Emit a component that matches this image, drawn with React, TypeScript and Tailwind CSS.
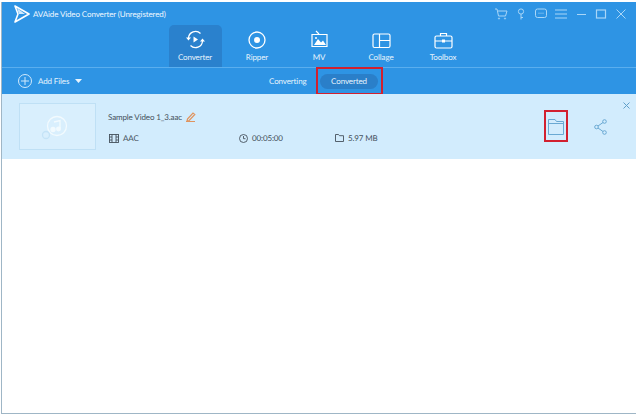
export default function App() {
  const tab = "w-[62px] h-[42px] flex flex-col items-center";
  return (
    <div className="w-[640px] h-[417px] bg-white pt-[2px] pl-[1px] pr-[4px] pb-[3px] font-['Lato','Noto_Sans',sans-serif] text-[8px] tracking-[-0.12px] leading-[10px] [text-rendering:geometricPrecision]">
      <div className="relative w-full h-full border-l border-b border-[#9fb6c6] flex flex-col bg-white">
        <div className="bg-[#2e94e4] h-[65px] flex flex-col text-white">
          <div className="h-[23px] flex items-center pl-[12px] pr-[8px]">
            <svg width="16" height="18" viewBox="0 0 16 18" fill="none">
              <path d="M1 1 L15 9 L1 17 L4 9 Z" stroke="#fff" strokeWidth="1.6" strokeLinejoin="round" />
              <path d="M3 3 L11 9 L5 9 Z" fill="#cfe8fb" />
            </svg>
            <span className="ml-[3px] text-[#f0f8ff]">AVAide Video Converter (Unregistered)</span>
            <div className="ml-auto flex items-center gap-[6px] text-[#a9d6f7]">
              <svg width="14" height="12" viewBox="0 0 14 12" fill="none" stroke="currentColor" strokeWidth="1"><path d="M1 1h2l1.500 7h7L13 3H4" /><circle cx="5" cy="10.500" r=".6" /><circle cx="11" cy="10.500" r=".6" /></svg>
              <svg width="14" height="12" viewBox="0 0 14 12" fill="none" stroke="currentColor" strokeWidth="1"><circle cx="7" cy="3.500" r="2.600" /><path d="M7 6v5.500M7 9.500h2" /></svg>
              <svg width="14" height="12" viewBox="0 0 14 12" fill="none" stroke="currentColor" strokeWidth="1"><rect x="1.500" y="1" width="11" height="8.500" rx="2" /><path d="M4.500 5.200h1M6.500 5.200h1M8.500 5.200h1" /></svg>
              <svg width="14" height="12" viewBox="0 0 14 12" fill="none" stroke="currentColor" strokeWidth="1"><path d="M1 2h12M1 6h12M1 10h12" /></svg>
              <svg width="14" height="12" viewBox="0 0 14 12" fill="none" stroke="currentColor" strokeWidth="1"><path d="M3 6.500h9" /></svg>
              <svg width="14" height="12" viewBox="0 0 14 12" fill="none" stroke="currentColor" strokeWidth="1.200"><rect x="2.500" y="2" width="9" height="8" /></svg>
              <svg width="14" height="12" viewBox="0 0 14 12" fill="none" stroke="currentColor" strokeWidth="1"><path d="M2.500 1.500l9 9M11.500 1.500l-9 9" /></svg>
            </div>
          </div>
          <div className="flex justify-center h-[42px] text-[#e8f4fd]">
            <div className={tab}>
              <div className="w-[53px] h-[42px] bg-[#2a81cd] rounded-t-[5px] flex flex-col items-center pt-[5px]">
                <svg width="21" height="19" viewBox="0 0 21 19" fill="none" stroke="#fff" strokeWidth="1.300">
                  <path d="M3.500 8a7 7 0 0 1 12-4.500" />
                  <path d="M17.500 11a7 7 0 0 1-12 4.500" />
                  <path d="M1 7.500h5L3.500 10.500zM15 11.500h5L17.500 8.500z" fill="#fff" stroke="none" />
                  <path d="M8.500 6.500l4.500 3-4.500 3z" fill="#fff" stroke="none" />
                </svg>
                <span className="mt-[3px]">Converter</span>
              </div>
            </div>
            <div className={tab}>
              <div className="pt-[6px]">
                <svg width="18" height="18" viewBox="0 0 18 18" fill="none"><circle cx="9" cy="9" r="8" stroke="#fff" strokeWidth="1.300" /><circle cx="9" cy="9" r="3" fill="#fff" /></svg>
              </div>
              <span className="mt-[3px]">Ripper</span>
            </div>
            <div className={tab}>
              <div className="pt-[5px]">
                <svg width="19" height="19" viewBox="0 0 19 19" fill="none" stroke="#fff" strokeWidth="1.200"><path d="M6 1l3 3M2 4.500h15v12H2z" /><path d="M4 15l4-6 3 3.500 2-2 3 4.500z" fill="#fff" stroke="none" /><circle cx="6" cy="8" r="1" fill="#fff" stroke="none" /></svg>
              </div>
              <span className="mt-[3px]">MV</span>
            </div>
            <div className={tab}>
              <div className="pt-[8px]">
                <svg width="19" height="16" viewBox="0 0 19 16" fill="none" stroke="#fff" strokeWidth="1.200"><rect x="1" y="1" width="17" height="13.500" rx="1.500" /><path d="M7.500 1v13.500M7.500 7.500H18" /></svg>
              </div>
              <span className="mt-[3px]">Collage</span>
            </div>
            <div className={tab}>
              <div className="pt-[7px]">
                <svg width="19" height="17" viewBox="0 0 19 17" fill="none" stroke="#fff" strokeWidth="1.200"><rect x="1" y="4" width="17" height="12" rx="1.500" /><path d="M6.500 4V1.500h6V4M1 9h17" /><rect x="8" y="7.500" width="3" height="3" fill="#fff" stroke="none" /></svg>
              </div>
              <span className="mt-[3px]">Toolbox</span>
            </div>
          </div>
        </div>
        <div className="relative h-[27px] bg-[#2e94e4] border-t border-[#5aaeee] flex items-center text-[#e8f4fd]">
          <div className="w-[267px] flex items-center pl-[16px]">
            <svg width="14" height="14" viewBox="0 0 14 14" fill="none" stroke="#cfe8fb" strokeWidth="1"><circle cx="7" cy="7" r="6.500" /><path d="M7 3v8M3 7h8" /></svg>
            <span className="ml-[6px] w-[37px] whitespace-nowrap">Add Files</span>
            <svg width="7" height="4" viewBox="0 0 7 4"><path d="M0 0h7L3.500 4z" fill="#e8f4fd" /></svg>
          </div>
          <span className="w-[51px]">Converting</span>
          <span className="w-[58px] h-[15px] rounded-full bg-[#2a7fc9] flex items-center justify-center">Converted</span>
          <div className="absolute left-[314px] top-[-1px] w-[67px] h-[28px] border-[2px] border-[#d2202f]" />
        </div>
        <div className="relative h-[65px] bg-[#d2ecfd] flex items-center pl-[17px] text-[#45515c]">
          <div className="w-[77px] h-[47px] bg-[#d9effd] border border-[#bfe0f5] flex items-center justify-center">
            <svg className="mr-[3px]" width="30" height="26" viewBox="0 0 30 26" fill="none" stroke="#f2fafe" strokeWidth="1.300"><circle cx="16" cy="12" r="9.500" /><circle cx="5" cy="21" r="3.500" stroke="#c4e3f7" /><path d="M13 8l6-1.500v8" /><circle cx="12" cy="15.500" r="2" fill="#f2fafe" /><circle cx="17.500" cy="15" r="1.800" fill="#f2fafe" /></svg>
          </div>
          <div className="ml-[12px] pt-[2px] flex flex-col">
            <div className="flex items-center h-[12px]">
              <span>Sample Video 1_3.aac</span>
              <svg className="ml-[4px]" width="10" height="10" viewBox="0 0 10 10" fill="none" stroke="#e0945f" strokeWidth="1.200"><path d="M1.500 7l5.500-6 1.800 1.500L3.200 8.500 1 9zM0 9.500h9" /></svg>
            </div>
            <div className="flex items-center h-[12px] mt-[9px] pl-[1px]">
              <div className="w-[130px] flex items-center">
                <svg width="10" height="9" viewBox="0 0 10 9" fill="none" stroke="#45515c" strokeWidth=".9"><rect x=".5" y=".5" width="9" height="8" /><path d="M3 .5v8M7 .5v8M.5 3h2.500M.5 6h2.500M7 3h2.500M7 6h2.500" /></svg>
                <span className="ml-[4px]">AAC</span>
              </div>
              <div className="w-[96px] flex items-center">
                <svg width="9" height="9" viewBox="0 0 9 9" fill="none" stroke="#45515c" strokeWidth=".9"><circle cx="4.500" cy="4.500" r="4" /><path d="M4.500 2v2.700h2" /></svg>
                <span className="ml-[4px]">00:05:00</span>
              </div>
              <div className="flex items-center">
                <svg width="9" height="8" viewBox="0 0 9 8" fill="none" stroke="#45515c" strokeWidth=".9"><path d="M.5 7.500v-7h3l1 1.200h4v5.800z" /></svg>
                <span className="ml-[4px]">5.97 MB</span>
              </div>
            </div>
          </div>
          <button className="absolute right-[6px] top-[8px] text-[#5f9fc9]">
            <svg width="7" height="7" viewBox="0 0 7 7" fill="none" stroke="currentColor" strokeWidth="1"><path d="M.5.500l6 6M6.500.500l-6 6" /></svg>
          </button>
          <div className="ml-auto flex items-center pr-[29px] gap-[30px] text-[#6aa9d3]">
            <svg width="16" height="16" viewBox="0 0 16 16" fill="none" stroke="currentColor" strokeWidth="1"><path d="M.5 15.500V.5h6.500l1.500 2h7v13z" /><path d="M.5 4.500h15" /></svg>
            <svg width="13" height="16" viewBox="0 0 13 16" fill="none" stroke="currentColor" strokeWidth="1"><circle cx="2.500" cy="8" r="1.800" /><circle cx="10.500" cy="2.500" r="1.800" /><circle cx="10.500" cy="13.500" r="1.800" /><path d="M4 7l5-3.500M4 9l5 3.500" /></svg>
          </div>
          <div className="absolute left-[542px] top-[16px] w-[24px] h-[32px] border-[2px] border-[#d2202f]" />
        </div>
        <div className="flex-1 bg-white" />
      </div>
    </div>
  );
}
